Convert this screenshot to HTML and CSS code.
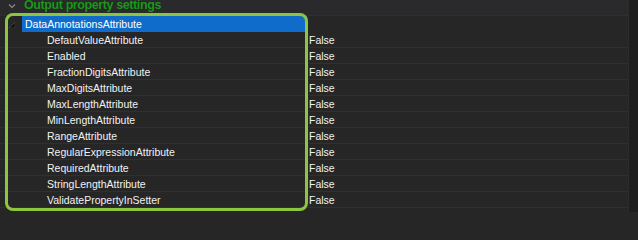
FILE: index.html
```html
<!DOCTYPE html>
<html>
<head>
<meta charset="utf-8">
<link rel="stylesheet" href="styles.css">
</head>
<body>
<div class="page">
  <div class="grid">
    <div class="row header">
      <span class="chev">
        <svg width="8" height="6" viewBox="0 0 8 6"><path d="M1 1.5 L4 4.5 L7 1.5" fill="none" stroke="#8a8a8a" stroke-width="1.2"/></svg>
      </span>
      <span class="htext">Output property settings</span>
    </div>
    <div class="row group">
      <span class="exp">
        <svg width="6" height="6" viewBox="0 0 6 6"><path d="M6 0 L6 6 L0 6 Z" fill="#111" stroke="#555" stroke-width="0.6"/></svg>
      </span>
      <span class="gname">DataAnnotationsAttribute</span>
    </div>
    <div class="row"><span class="name">DefautValueAttribute</span><span class="val">False</span></div>
    <div class="row"><span class="name">Enabled</span><span class="val">False</span></div>
    <div class="row"><span class="name">FractionDigitsAttribute</span><span class="val">False</span></div>
    <div class="row"><span class="name">MaxDigitsAttribute</span><span class="val">False</span></div>
    <div class="row"><span class="name">MaxLengthAttribute</span><span class="val">False</span></div>
    <div class="row"><span class="name">MinLengthAttribute</span><span class="val">False</span></div>
    <div class="row"><span class="name">RangeAttribute</span><span class="val">False</span></div>
    <div class="row"><span class="name">RegularExpressionAttribute</span><span class="val">False</span></div>
    <div class="row"><span class="name">RequiredAttribute</span><span class="val">False</span></div>
    <div class="row"><span class="name">StringLengthAttribute</span><span class="val">False</span></div>
    <div class="row"><span class="name">ValidatePropertyInSetter</span><span class="val">False</span></div>
    <div class="row"><span class="name"></span><span class="val"></span></div>
  </div>
  <div class="strip"></div>
  <div class="highlight"></div>
</div>
</body>
</html>
```
FILE: styles.css
```css
html, body {
  margin: 0;
  padding: 0;
  background: #262627;
  overflow: hidden;
}
.page {
  position: relative;
  width: 638px;
  height: 212px;
  display: flex;
  overflow: hidden;
  font-family: "Liberation Sans", Arial, sans-serif;
  font-size: 10.5px;
  color: #f2f2f2;
}
.grid {
  flex: 1;
  display: flex;
  flex-direction: column;
  background: #262627;
}
.strip {
  width: 9px;
  background: #1e1e1f;
  border-left: 1px solid #2c2c2d;
}
.row {
  height: 16px;
  flex: none;
  box-sizing: border-box;
  border-bottom: 1px solid #303031;
  display: grid;
  grid-template-columns: 309px 1fr;
  align-items: center;
  line-height: 14px;
  padding-top: 1px;
}
.row .name {
  padding-left: 47px;
  white-space: nowrap;
}
.row .val {
  white-space: nowrap;
}
.header {
  background: #2a2a2c;
  display: flex;
  align-items: flex-end;
  overflow: hidden;
  border-bottom: 1px solid #2f2f30;
  padding-top: 0;
}
.chev {
  width: 25px;
  display: flex;
  justify-content: center;
  align-self: flex-start;
  padding-top: 3px;
  margin-left: -1px;
}
.htext {
  font-weight: bold;
  font-size: 12.5px;
  letter-spacing: -0.4px;
  color: #1f951f;
  line-height: 12px;
  margin-bottom: 4px;
  text-shadow: 0 0 1px #0a300a;
  white-space: nowrap;
}
.group {
  display: flex;
  border-bottom: none;
  padding-top: 0;
}
.exp {
  width: 22px;
  display: flex;
  justify-content: flex-end;
  padding-right: 7px;
  box-sizing: border-box;
  margin-top: 2px;
}
.gname {
  width: 282px;
  height: 100%;
  background: #0f6ccb;
  padding-left: 3px;
  display: flex;
  align-items: center;
  color: #ffffff;
}
.highlight {
  position: absolute;
  left: 5px;
  top: 13px;
  width: 303px;
  height: 198px;
  box-sizing: border-box;
  border: 3.5px solid #8cc63f;
  border-radius: 8px;
  pointer-events: none;
}
```
